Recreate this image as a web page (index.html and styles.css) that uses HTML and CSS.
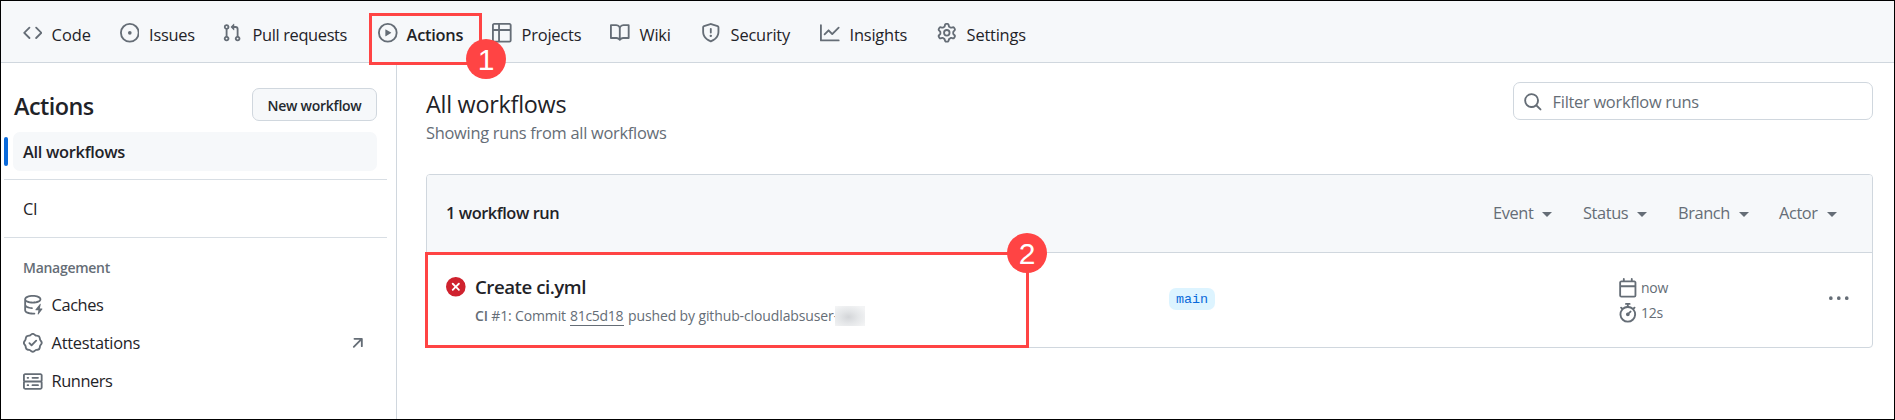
FILE: index.html
```html
<!DOCTYPE html>
<html lang="en">
<head>
<meta charset="utf-8">
<title>All workflows</title>
<link rel="stylesheet" href="styles.css">
</head>
<body>
<div class="page">
  <nav class="tabs">
    <a class="tab"><svg class="icon" viewBox="0 0 16 16"><path d="m11.28 3.22 4.25 4.25a.75.75 0 0 1 0 1.06l-4.25 4.25a.749.749 0 0 1-1.275-.326.749.749 0 0 1 .215-.734L13.94 8l-3.72-3.72a.749.749 0 0 1 .326-1.275.749.749 0 0 1 .734.215Zm-6.56 0a.751.751 0 0 1 1.042.018.751.751 0 0 1 .018 1.042L2.06 8l3.72 3.72a.749.749 0 0 1-.326 1.275.749.749 0 0 1-.734-.215L.47 8.53a.75.75 0 0 1 0-1.06Z"/></svg><span class="t-code">Code</span></a>
    <a class="tab"><svg class="icon" viewBox="0 0 16 16"><path d="M8 9.5a1.5 1.5 0 1 0 0-3 1.5 1.5 0 0 0 0 3Z"/><path d="M8 0a8 8 0 1 1 0 16A8 8 0 0 1 8 0ZM1.5 8a6.5 6.5 0 1 0 13 0 6.5 6.5 0 0 0-13 0Z"/></svg><span class="t-issues">Issues</span></a>
    <a class="tab"><svg class="icon" viewBox="0 0 16 16"><path d="M1.5 3.25a2.25 2.25 0 1 1 3 2.122v5.256a2.251 2.251 0 1 1-1.5 0V5.372A2.25 2.25 0 0 1 1.5 3.25Zm5.677-.177L9.573.677A.25.25 0 0 1 10 .854V2.5h1A2.5 2.5 0 0 1 13.5 5v5.628a2.251 2.251 0 1 1-1.5 0V5a1 1 0 0 0-1-1h-1v1.646a.25.25 0 0 1-.427.177L7.177 3.427a.25.25 0 0 1 0-.354ZM3.75 2.5a.75.75 0 1 0 0 1.5.75.75 0 0 0 0-1.5Zm0 9.5a.75.75 0 1 0 0 1.5.75.75 0 0 0 0-1.5Zm8.25.75a.75.75 0 1 0 1.5 0 .75.75 0 0 0-1.5 0Z"/></svg><span class="t-pulls">Pull requests</span></a>
    <a class="tab current"><svg class="icon" viewBox="0 0 16 16"><path d="M8 0a8 8 0 1 1 0 16A8 8 0 0 1 8 0ZM1.5 8a6.5 6.5 0 1 0 13 0 6.5 6.5 0 0 0-13 0Zm4.879-2.773 4.264 2.559a.25.25 0 0 1 0 .428l-4.264 2.559A.25.25 0 0 1 6 10.559V5.442a.25.25 0 0 1 .379-.215Z"/></svg><span class="t-actions">Actions</span></a>
    <a class="tab"><svg class="icon" viewBox="0 0 16 16"><path d="M0 1.75C0 .784.784 0 1.75 0h12.5C15.216 0 16 .784 16 1.75v12.5A1.75 1.75 0 0 1 14.25 16H1.75A1.75 1.75 0 0 1 0 14.25ZM6.5 6.5v8h7.75a.25.25 0 0 0 .25-.25V6.5Zm8-1.5V1.75a.25.25 0 0 0-.25-.25H6.5V5Zm-13 1.5v7.75c0 .138.112.25.25.25H5v-8ZM5 5V1.5H1.75a.25.25 0 0 0-.25.25V5Z"/></svg><span class="t-projects">Projects</span></a>
    <a class="tab"><svg class="icon" viewBox="0 0 16 16"><path d="M0 1.75A.75.75 0 0 1 .75 1h4.253c1.227 0 2.317.59 3 1.501A3.743 3.743 0 0 1 11.006 1h4.245a.75.75 0 0 1 .75.75v10.5a.75.75 0 0 1-.75.75h-4.507a2.25 2.25 0 0 0-1.591.659l-.622.621a.75.75 0 0 1-1.06 0l-.622-.621A2.25 2.25 0 0 0 5.258 13H.75a.75.75 0 0 1-.75-.75Zm7.251 10.324.004-5.073-.002-2.253A2.25 2.25 0 0 0 5.003 2.5H1.5v9h3.757a3.75 3.75 0 0 1 1.994.574ZM8.755 4.75l-.004 7.322a3.752 3.752 0 0 1 1.992-.572H14.5v-9h-3.495a2.25 2.25 0 0 0-2.25 2.25Z"/></svg><span class="t-wiki">Wiki</span></a>
    <a class="tab"><svg class="icon" viewBox="0 0 16 16"><path d="M7.467.133a1.748 1.748 0 0 1 1.066 0l5.25 1.68A1.75 1.75 0 0 1 15 3.48V7c0 1.566-.32 3.182-1.303 4.682-.983 1.498-2.585 2.813-5.032 3.855a1.697 1.697 0 0 1-1.33 0c-2.447-1.042-4.049-2.357-5.032-3.855C1.32 10.182 1 8.566 1 7V3.48a1.75 1.75 0 0 1 1.217-1.667Zm.61 1.429a.25.25 0 0 0-.153 0l-5.25 1.68a.25.25 0 0 0-.174.238V7c0 1.358.275 2.666 1.057 3.86.784 1.194 2.121 2.34 4.366 3.297a.196.196 0 0 0 .154 0c2.245-.956 3.582-2.104 4.366-3.298C13.225 9.666 13.5 8.36 13.5 7V3.48a.251.251 0 0 0-.174-.237l-5.25-1.68ZM8.75 4.75v3a.75.75 0 0 1-1.5 0v-3a.75.75 0 0 1 1.5 0ZM9 10.5a1 1 0 1 1-2 0 1 1 0 0 1 2 0Z"/></svg><span class="t-security">Security</span></a>
    <a class="tab"><svg class="icon" viewBox="0 0 16 16"><path d="M1.5 1.75V13.5h13.75a.75.75 0 0 1 0 1.5H.75a.75.75 0 0 1-.75-.75V1.75a.75.75 0 0 1 1.5 0Zm14.28 2.53-5.25 5.25a.75.75 0 0 1-1.06 0L7 7.06 4.28 9.78a.751.751 0 0 1-1.042-.018.751.751 0 0 1-.018-1.042l3.25-3.25a.75.75 0 0 1 1.06 0L10 7.94l4.72-4.72a.751.751 0 0 1 1.042.018.751.751 0 0 1 .018 1.042Z"/></svg><span class="t-insights">Insights</span></a>
    <a class="tab"><svg class="icon" viewBox="0 0 16 16"><path d="M8 0a8.2 8.2 0 0 1 .701.031C9.444.095 9.99.645 10.16 1.29l.288 1.107c.018.066.079.158.212.224.231.114.454.243.668.386.123.082.233.09.299.071l1.103-.303c.644-.176 1.392.021 1.82.63.27.385.506.792.704 1.218.315.675.111 1.422-.364 1.891l-.814.806c-.049.048-.098.147-.088.294.016.257.016.515 0 .772-.01.147.038.246.088.294l.814.806c.475.469.679 1.216.364 1.891a7.977 7.977 0 0 1-.704 1.217c-.428.61-1.176.807-1.82.63l-1.102-.302c-.067-.019-.177-.011-.3.071a5.909 5.909 0 0 1-.668.386c-.133.066-.194.158-.211.224l-.29 1.106c-.168.646-.715 1.196-1.458 1.26a8.006 8.006 0 0 1-1.402 0c-.743-.064-1.289-.614-1.458-1.26l-.289-1.106c-.018-.066-.079-.158-.212-.224a5.738 5.738 0 0 1-.668-.386c-.123-.082-.233-.09-.299-.071l-1.103.303c-.644.176-1.392-.021-1.82-.63a8.12 8.12 0 0 1-.704-1.218c-.315-.675-.111-1.422.363-1.891l.815-.806c.05-.048.098-.147.088-.294a6.214 6.214 0 0 1 0-.772c.01-.147-.038-.246-.088-.294l-.815-.806C.635 6.045.431 5.298.746 4.623a7.92 7.92 0 0 1 .704-1.217c.428-.61 1.176-.807 1.82-.63l1.102.302c.067.019.177.011.3-.071.214-.143.437-.272.668-.386.133-.066.194-.158.211-.224l.29-1.106C6.009.645 6.556.095 7.299.03 7.53.01 7.764 0 8 0Zm-.571 1.525c-.036.003-.108.036-.137.146l-.289 1.105c-.147.561-.549.967-.998 1.189-.173.086-.34.183-.5.29-.417.278-.97.423-1.529.27l-1.103-.303c-.109-.03-.175.016-.195.045-.22.312-.412.644-.573.99-.014.031-.021.11.059.19l.815.806c.411.406.562.957.53 1.456a4.709 4.709 0 0 0 0 .582c.032.499-.119 1.05-.53 1.456l-.815.806c-.081.08-.073.159-.059.19.162.346.353.677.573.989.02.03.085.076.195.046l1.102-.303c.56-.153 1.113-.008 1.53.27.161.107.328.204.501.29.447.222.85.629.997 1.189l.289 1.105c.029.109.101.143.137.146a6.6 6.6 0 0 0 1.142 0c.036-.003.108-.036.137-.146l.289-1.105c.147-.561.549-.967.998-1.189.173-.086.34-.183.5-.29.417-.278.97-.423 1.529-.27l1.103.303c.109.029.175-.016.195-.045.22-.313.411-.644.573-.99.014-.031.021-.11-.059-.19l-.815-.806c-.411-.406-.562-.957-.53-1.456a4.709 4.709 0 0 0 0-.582c-.032-.499.119-1.05.53-1.456l.815-.806c.081-.08.073-.159.059-.19a6.464 6.464 0 0 0-.573-.989c-.02-.03-.085-.076-.195-.046l-1.102.303c-.56.153-1.113.008-1.53-.27a4.44 4.44 0 0 0-.501-.29c-.447-.222-.85-.629-.997-1.189l-.289-1.105c-.029-.11-.101-.143-.137-.146a6.6 6.6 0 0 0-1.142 0ZM11 8a3 3 0 1 1-6 0 3 3 0 0 1 6 0ZM9.5 8a1.5 1.5 0 1 0-3.001.001A1.5 1.5 0 0 0 9.5 8Z"/></svg><span class="t-settings">Settings</span></a>
  </nav>

  <div class="body">
    <aside class="sidebar">
      <header class="side-head"><h2>Actions</h2><button class="new-btn"><span>New workflow</span></button></header>
      <div class="selected"><span>All workflows</span></div>
      <div class="workflow"><span>CI</span></div>
      <h3>Management</h3>
      <ul class="side-list">
        <li><svg class="icon" viewBox="0 0 16 16"><path d="M2.5 5.724V8c0 .248.238.7 1.169 1.159.874.43 2.144.745 3.62.822a.75.75 0 1 1-.078 1.498c-1.622-.085-3.102-.432-4.204-.975a5.565 5.565 0 0 1-.507-.28V12.5c0 .133.058.318.282.551.227.237.591.483 1.101.707 1.015.447 2.47.742 4.117.742.406 0 .802-.018 1.183-.052a.751.751 0 1 1 .134 1.494C8.89 15.98 8.45 16 8 16c-1.805 0-3.475-.32-4.721-.869-.623-.274-1.173-.619-1.579-1.041-.408-.425-.7-.964-.7-1.59v-9c0-.626.292-1.165.7-1.591.406-.42.956-.766 1.579-1.04C4.525.32 6.195 0 8 0c1.806 0 3.476.32 4.721.869.623.274 1.173.619 1.579 1.041.408.425.7.964.7 1.59 0 .626-.292 1.165-.7 1.591-.406.42-.956.766-1.578 1.04C11.475 6.68 9.805 7 8 7c-1.805 0-3.475-.32-4.721-.869a6.15 6.15 0 0 1-.779-.407Zm0-2.224c0 .133.058.318.282.551.227.237.591.483 1.101.707C4.898 5.205 6.353 5.5 8 5.5c1.646 0 3.101-.295 4.118-.742.508-.224.873-.471 1.1-.708.224-.232.282-.417.282-.55 0-.133-.058-.318-.282-.551-.227-.237-.591-.483-1.101-.707C11.102 1.795 9.647 1.5 8 1.5c-1.646 0-3.101.295-4.118.742-.508.224-.873.471-1.1.708-.224.232-.282.417-.282.55Z"/><path d="M14.49 7.582a.375.375 0 0 0-.66-.313l-3.625 4.625a.375.375 0 0 0 .295.606h2.127l-.619 2.922a.375.375 0 0 0 .666.304l3.125-4.125A.375.375 0 0 0 15.5 11h-1.778l.769-3.418Z"/></svg><span class="t-caches">Caches</span></li>
        <li><svg class="icon" viewBox="0 0 16 16"><path d="m9.585.52.929.68c.153.112.331.186.518.215l1.138.175a2.678 2.678 0 0 1 2.24 2.24l.174 1.139c.029.187.103.365.215.518l.68.928a2.677 2.677 0 0 1 0 3.17l-.68.928a1.174 1.174 0 0 0-.215.518l-.175 1.138a2.678 2.678 0 0 1-2.241 2.241l-1.138.175a1.17 1.17 0 0 0-.518.215l-.928.68a2.677 2.677 0 0 1-3.17 0l-.928-.68a1.174 1.174 0 0 0-.518-.215L3.83 14.41a2.678 2.678 0 0 1-2.24-2.24l-.175-1.138a1.17 1.17 0 0 0-.215-.518l-.68-.928a2.677 2.677 0 0 1 0-3.17l.68-.928c.112-.153.186-.331.215-.518l.175-1.14a2.678 2.678 0 0 1 2.24-2.24l1.139-.175c.187-.029.365-.103.518-.215l.928-.68a2.677 2.677 0 0 1 3.17 0ZM7.303 1.728l-.927.68a2.67 2.67 0 0 1-1.18.489l-1.137.174a1.179 1.179 0 0 0-.987.987l-.174 1.136a2.677 2.677 0 0 1-.489 1.18l-.68.928a1.18 1.18 0 0 0 0 1.394l.68.927c.256.348.424.753.489 1.18l.174 1.137c.078.509.478.909.987.987l1.136.174a2.67 2.67 0 0 1 1.18.489l.928.68c.414.305.979.305 1.394 0l.927-.68a2.67 2.67 0 0 1 1.18-.489l1.137-.174a1.18 1.18 0 0 0 .987-.987l.174-1.136a2.67 2.67 0 0 1 .489-1.18l.68-.928a1.176 1.176 0 0 0 0-1.394l-.68-.927a2.686 2.686 0 0 1-.489-1.18l-.174-1.137a1.179 1.179 0 0 0-.987-.987l-1.136-.174a2.677 2.677 0 0 1-1.18-.489l-.928-.68a1.176 1.176 0 0 0-1.394 0ZM11.28 6.78l-3.75 3.75a.75.75 0 0 1-1.06 0L4.72 8.78a.751.751 0 0 1 .018-1.042.751.751 0 0 1 1.042-.018L7 8.94l3.22-3.22a.751.751 0 0 1 1.042.018.751.751 0 0 1 .018 1.042Z"/></svg><span class="t-attest">Attestations</span><svg class="icon arrow" viewBox="0 0 16 16"><path d="M4.53 4.75A.75.75 0 0 1 5.28 4h6.01a.75.75 0 0 1 .75.75v6.01a.75.75 0 0 1-1.5 0v-4.2l-5.26 5.261a.749.749 0 0 1-1.275-.326.749.749 0 0 1 .215-.734L9.48 5.5h-4.2a.75.75 0 0 1-.75-.75Z"/></svg></li>
        <li><svg class="icon" viewBox="0 0 16 16"><path d="M1.75 1h12.5c.966 0 1.75.784 1.75 1.75v4c0 .372-.116.717-.314 1 .198.283.314.628.314 1v4a1.75 1.75 0 0 1-1.75 1.75H1.75A1.75 1.75 0 0 1 0 12.75v-4c0-.358.109-.707.314-1a1.739 1.739 0 0 1-.314-1v-4C0 1.784.784 1 1.75 1ZM1.5 2.75v4c0 .138.112.25.25.25h12.5a.25.25 0 0 0 .25-.25v-4a.25.25 0 0 0-.25-.25H1.75a.25.25 0 0 0-.25.25Zm.25 5.75a.25.25 0 0 0-.25.25v4c0 .138.112.25.25.25h12.5a.25.25 0 0 0 .25-.25v-4a.25.25 0 0 0-.25-.25ZM7 4.75A.75.75 0 0 1 7.75 4h4.5a.75.75 0 0 1 0 1.5h-4.5A.75.75 0 0 1 7 4.75ZM7.75 10h4.5a.75.75 0 0 1 0 1.5h-4.5a.75.75 0 0 1 0-1.5ZM3 4.75A.75.75 0 0 1 3.75 4h.5a.75.75 0 0 1 0 1.5h-.5A.75.75 0 0 1 3 4.75ZM3.75 10h.5a.75.75 0 0 1 0 1.5h-.5a.75.75 0 0 1 0-1.5Z"/></svg><span class="t-runners">Runners</span></li>
      </ul>
    </aside>

    <main class="main">
      <header class="main-head">
        <div class="titles"><h1><span>All workflows</span></h1><p><span>Showing runs from all workflows</span></p></div>
        <div class="search"><svg class="icon" viewBox="0 0 16 16"><path d="M10.68 11.74a6 6 0 0 1-7.922-8.982 6 6 0 0 1 8.982 7.922l3.04 3.04a.749.749 0 0 1-.326 1.275.749.749 0 0 1-.734-.215ZM11.5 7a4.499 4.499 0 1 0-8.997 0A4.499 4.499 0 0 0 11.5 7Z"/></svg><span>Filter workflow runs</span></div>
      </header>
      <section class="runs">
        <header class="runs-head">
          <strong>1 workflow run</strong>
          <div class="filters">
            <span class="f-event">Event</span><span class="f-status">Status</span><span class="f-branch">Branch</span><span class="f-actor">Actor</span>
          </div>
        </header>
        <div class="run">
          <svg class="icon fail" viewBox="0 0 16 16"><path d="M2.343 13.657A8 8 0 1 1 13.658 2.343 8 8 0 0 1 2.343 13.657ZM6.03 4.97a.751.751 0 0 0-1.042.018.751.751 0 0 0-.018 1.042L6.94 8 4.97 9.97a.749.749 0 0 0 .326 1.275.749.749 0 0 0 .734-.215L8 9.06l1.97 1.97a.749.749 0 0 0 1.275-.326.749.749 0 0 0-.215-.734L9.06 8l1.97-1.97a.749.749 0 0 0-.326-1.275.749.749 0 0 0-.734.215L8 6.94Z"/></svg>
          <div class="run-text">
            <div class="run-title"><span>Create ci.yml</span></div>
            <div class="run-sub"><span class="s-ci"><b>CI</b> #1: Commit</span><span class="hash">81c5d18</span><span class="s-by">pushed by github-cloudlabsuser-</span><i class="smudge"></i></div>
          </div>
          <div class="branch-col"><span class="branch">main</span></div>
          <div class="times">
            <div><svg class="icon" viewBox="0 0 16 16"><path d="M4.75 0a.75.75 0 0 1 .75.75V2h5V.75a.75.75 0 0 1 1.5 0V2h1.25c.966 0 1.75.784 1.75 1.75v10.5A1.75 1.75 0 0 1 13.25 16H2.75A1.75 1.75 0 0 1 1 14.25V3.75C1 2.784 1.784 2 2.75 2H4V.75A.75.75 0 0 1 4.75 0ZM2.5 7.5v6.75c0 .138.112.25.25.25h10.5a.25.25 0 0 0 .25-.25V7.5Zm10.75-4H2.75a.25.25 0 0 0-.25.25V6h11V3.75a.25.25 0 0 0-.25-.25Z"/></svg><span class="t-now">now</span></div>
            <div><svg class="icon" viewBox="0 0 16 16"><path d="M5.75.75A.75.75 0 0 1 6.5 0h3a.75.75 0 0 1 0 1.5h-.75v1l-.001.041a6.724 6.724 0 0 1 3.464 1.435l.007-.006.75-.75a.749.749 0 0 1 1.275.326.749.749 0 0 1-.215.734l-.75.75-.006.007a6.75 6.75 0 1 1-10.548 0L2.72 5.03l-.75-.75a.751.751 0 0 1 .018-1.042.751.751 0 0 1 1.042-.018l.75.75.007.006A6.72 6.72 0 0 1 7.25 2.541V1.5H6.5a.75.75 0 0 1-.75-.75ZM8 14.5a5.25 5.25 0 1 0-.001-10.501A5.25 5.25 0 0 0 8 14.5Zm.389-6.7 1.33-1.33a.75.75 0 1 1 1.061 1.06L9.45 8.861A1.503 1.503 0 0 1 8 10.75a1.499 1.499 0 1 1 .389-2.95Z"/></svg><span class="t-dur">12s</span></div>
          </div>
          <svg class="icon kebab" viewBox="0 0 16 16"><path d="M8 9a1.5 1.5 0 1 0 0-3 1.5 1.5 0 0 0 0 3ZM1.5 9a1.5 1.5 0 1 0 0-3 1.5 1.5 0 0 0 0 3Zm13 0a1.5 1.5 0 1 0 0-3 1.5 1.5 0 0 0 0 3Z"/></svg>
        </div>
      </section>
    </main>
  </div>

  <div class="mark mark-tab"><b>1</b></div>
  <div class="mark mark-run"><b>2</b></div>
</div>
</body>
</html>
```
FILE: styles.css
```css
* { box-sizing: border-box; margin: 0; padding: 0; }
body { font-family: "Open Sans", "Noto Sans", sans-serif; font-size: 16.4px; line-height: 24px; letter-spacing: -0.27px; color: #1f2328; background: #fff; }
.page { position: relative; width: 1895px; height: 420px; border: 1px solid #000; overflow: hidden; display: flex; flex-direction: column; }
.page span, strong, h2, h3 { white-space: nowrap; }
.icon { width: 19.6px; height: 19.6px; flex: none; fill: #656d76; }

.tabs { height: 62px; flex: none; background: #f6f8fa; border-bottom: 1px solid #d0d7de; padding: 3px 0 0 21.5px; display: grid; grid-template-columns: 97px 102.5px 156px 114px 118px 91px 119px 117px 110px; align-items: center; }
.tab { display: flex; align-items: center; gap: 10px; }
.tab span { padding-top: 3px; }
.t-code { letter-spacing: 0; margin-left: -0.5px; }
.t-pulls { letter-spacing: -0.36px; margin-left: 1px; }
.t-projects, .t-security, .t-insights, .t-settings { letter-spacing: -0.2px; }
.current span { font-weight: 600; margin-left: -1px; }

.body { flex: 1; display: flex; }
.sidebar { width: 396px; border-right: 1px solid #d0d7de; padding-left: 3px; }
.side-head { display: flex; justify-content: space-between; align-items: center; padding: 25px 19px 0 10px; height: 58px; }
.side-head h2 { font-size: 23.4px; font-weight: 600; line-height: 32px; padding-top: 2px; letter-spacing: -0.55px; }
.new-btn { width: 125px; height: 33px; border: 1px solid #d0d7de; border-radius: 7px; background: #f6f8fa; font: 600 14px/20px "Open Sans", "Noto Sans", sans-serif; letter-spacing: -0.25px; color: #24292f; padding-top: 2px; }
.selected { position: relative; margin: 11px 19px 0 9px; height: 39px; border-radius: 7px; background: #f6f8fa; padding: 8px 10px; font-weight: 600; letter-spacing: -0.3px; }
.selected::before { content: ""; position: absolute; left: -9px; top: 5px; width: 4px; height: 29px; border-radius: 3px; background: #0969da; }
.workflow { margin: 8px 9px 0 0; height: 59px; border: solid #d8dee4; border-width: 1px 0; padding: 17px 19px; }
.sidebar h3 { font-size: 14px; font-weight: 600; line-height: 20px; color: #656d76; padding: 20px 19px 0; }
.side-list { list-style: none; padding: 8px 19px 0; }
.side-list li { display: flex; align-items: center; gap: 9px; height: 38.2px; }
.t-caches, .t-runners { letter-spacing: -0.45px; }
.arrow { margin-left: auto; margin-right: 9px; }

.main { flex: 1; padding: 19px 21px 0 29px; }
.main-head { display: flex; justify-content: space-between; align-items: flex-start; height: 92px; }
.main-head h1 { font-size: 23.4px; font-weight: 400; line-height: 32px; padding-top: 6px; }
.main-head p { color: #656d76; line-height: 24px; padding-top: 1px; }
.search { width: 360px; height: 38px; border: 1px solid #d0d7de; border-radius: 7px; display: flex; align-items: center; gap: 10px; padding-left: 9px; color: #656d76; }
.search .icon { margin-top: 2px; }
.search span { padding-top: 1px; }
.runs { height: 174px; border: 1px solid #d0d7de; border-radius: 4px; overflow: hidden; }
.runs-head { height: 78px; background: #f6f8fa; border-bottom: 1px solid #d0d7de; display: flex; align-items: center; justify-content: space-between; padding: 0 0 1px 19px; }
.runs-head strong { font-weight: 600; letter-spacing: -0.45px; }
.filters { display: grid; grid-template-columns: 90px 95px 101px 93px; color: #656d76; letter-spacing: -0.4px; }
.filters span { display: flex; align-items: center; gap: 9px; }
.filters span::after { content: ""; border: 5px solid transparent; border-top-color: #656d76; border-bottom: 0; margin-top: 3px; }
.run { height: 94px; display: flex; padding-left: 19px; }
.fail { fill: #cf222e; margin-top: 24px; }
.run-text { margin-left: 9.4px; width: 694px; padding-top: 20px; }
.run-title { font-size: 18.7px; font-weight: 600; line-height: 28px; letter-spacing: -0.48px; }
.run-sub { display: flex; height: 20px; margin-top: 5px; font-size: 14px; line-height: 20px; letter-spacing: 0; color: #656d76; }
.run-sub b { font-weight: 600; }
.run-sub .s-ci { width: 95px; flex: none; letter-spacing: -0.15px; }
.hash { width: 54px; flex: none; margin-right: 4px; border-bottom: 1px solid #656d76; height: 20px; letter-spacing: -0.3px; }
.s-by { width: 207px; flex: none; letter-spacing: -0.12px; }
.smudge { width: 30px; height: 20px; background: radial-gradient(ellipse at 45% 55%, #d3d5d8 0, #e4e6e8 40%, #f3f4f5 85%); }
.branch-col { width: 450px; padding-top: 35px; }
.branch { display: block; width: 46px; height: 22px; border-radius: 7px; background: #ddf4ff; color: #0969da; font: 13.4px/23px "Liberation Mono", monospace; letter-spacing: 0; text-align: center; }
.times { width: 210px; padding-top: 25px; color: #656d76; font-size: 14px; }
.times div { display: flex; align-items: center; gap: 3px; height: 20px; margin-bottom: 5px; }
.times .icon { margin-left: -0.6px; }
.kebab { margin-top: 36px; }

.mark { position: absolute; border: 3px solid #ff4444; }
.mark-tab { left: 368px; top: 12px; width: 113px; height: 52px; }
.mark-run { left: 424px; top: 251px; width: 604px; height: 96px; }
.mark b { position: absolute; width: 40px; height: 40px; border-radius: 50%; background: #ff4444; color: #fff; font: 400 30px/42px "Liberation Sans", Arial, sans-serif; letter-spacing: 0; text-align: center; }
.mark-tab b { left: 94px; top: 23px; }
.mark-run b { left: 579px; top: -22px; }
```
